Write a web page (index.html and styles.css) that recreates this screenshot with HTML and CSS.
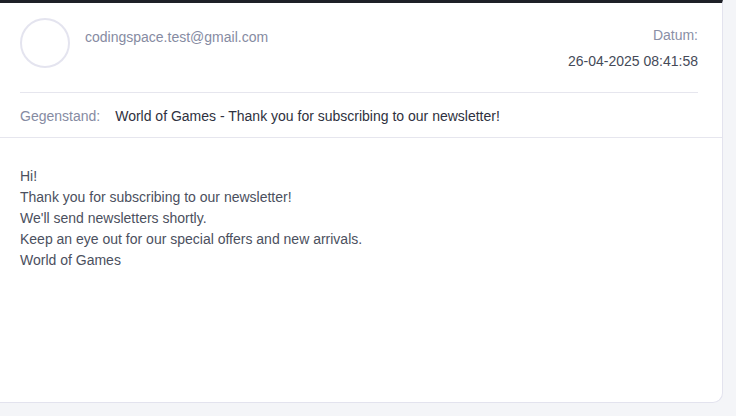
FILE: index.html
```html
<!DOCTYPE html>
<html lang="de">
<head>
<meta charset="utf-8">
<title>Mail</title>
<link rel="stylesheet" href="styles.css">
</head>
<body>
<div class="card">
  <div class="head">
    <div class="sender">
      <div class="avatar"></div>
      <div class="email">codingspace.test@gmail.com</div>
    </div>
    <div class="date">
      <div class="date-label">Datum:</div>
      <div class="date-value">26-04-2025 08:41:58</div>
    </div>
  </div>
  <div class="subject">
    <span class="subject-label">Gegenstand:</span>
    <span class="subject-value">World of Games - Thank you for subscribing to our newsletter!</span>
  </div>
  <div class="body">
    <div>Hi!</div>
    <div>Thank you for subscribing to our newsletter!</div>
    <div>We'll send newsletters shortly.</div>
    <div>Keep an eye out for our special offers and new arrivals.</div>
    <div>World of Games</div>
  </div>
</div>
</body>
</html>
```
FILE: styles.css
```css
html, body {
  margin: 0;
  padding: 0;
}
body {
  background: #f4f5f8;
  font-family: "Liberation Sans", Arial, sans-serif;
  font-size: 14px;
  height: 416px;
  overflow: hidden;
}
.card {
  box-sizing: border-box;
  width: 723px;
  height: 403px;
  background: #ffffff;
  border-top: 3px solid #1e2027;
  border-right: 1px solid #e3e3ee;
  border-bottom: 1px solid #e3e3ee;
  border-radius: 0 0 10px 0;
}
.head {
  display: flex;
  justify-content: space-between;
  margin: 0 24px 0 20px;
  padding-top: 15px;
  padding-bottom: 21px;
  border-bottom: 1px solid #e6e6ee;
}
.sender {
  display: flex;
  align-items: flex-start;
}
.avatar {
  box-sizing: border-box;
  width: 50px;
  height: 50px;
  border: 2px solid #e4e4ef;
  border-radius: 50%;
}
.email {
  margin-left: 15px;
  margin-top: 9px;
  line-height: 20px;
  color: #868ba2;
}
.date {
  text-align: right;
  line-height: 20px;
  padding-top: 7px;
}
.date-label {
  color: #8a8fa6;
}
.date-value {
  margin-top: 6px;
  color: #454a58;
}
.subject {
  display: flex;
  gap: 15px;
  padding: 13px 20px 11px 20px;
  line-height: 20px;
  border-bottom: 1px solid #e6e6ee;
}
.subject-label {
  color: #868ba2;
}
.subject-value {
  color: #2e3140;
}
.body {
  padding: 28px 20px 0 20px;
  line-height: 21px;
  color: #4b505e;
}
```
